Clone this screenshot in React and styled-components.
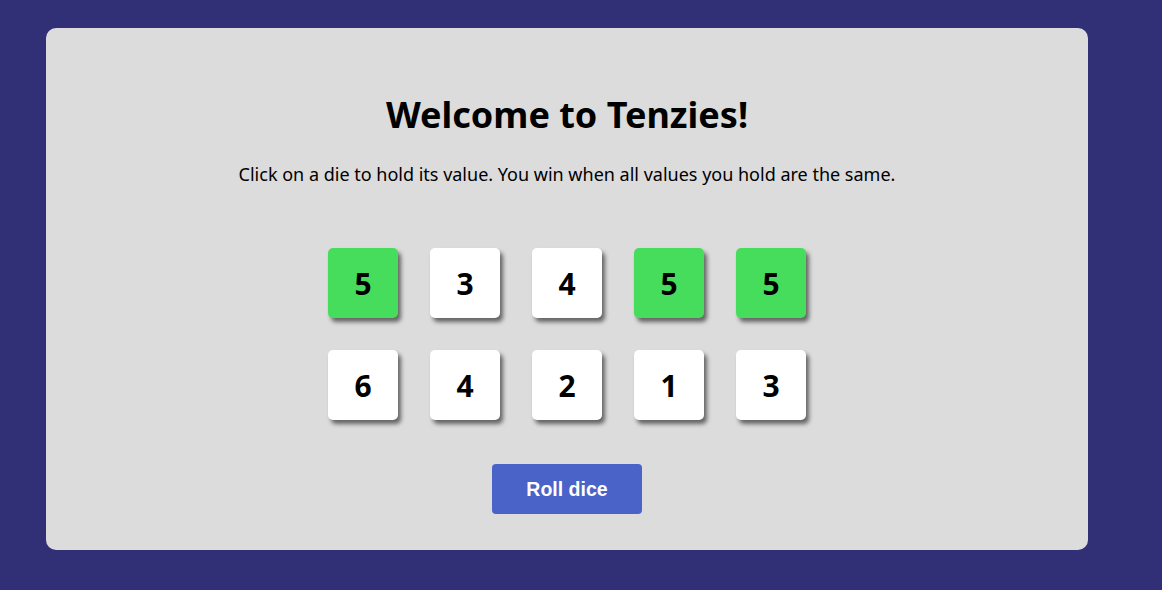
import React from "react";
import styled, { createGlobalStyle } from "styled-components";

const dice = [
  { value: 5, held: true },
  { value: 3, held: false },
  { value: 4, held: false },
  { value: 5, held: true },
  { value: 5, held: true },
  { value: 6, held: false },
  { value: 4, held: false },
  { value: 2, held: false },
  { value: 1, held: false },
  { value: 3, held: false },
];

export default function App() {
  return (
    <>
      <GlobalStyle />
      <Page>
        <Board>
          <Title>Welcome to Tenzies!</Title>
          <Instructions>
            Click on a die to hold its value. You win when all values you hold
            are the same.
          </Instructions>
          <DiceGrid>
            {dice.map((die, i) => (
              <Die key={i} $held={die.held}>
                {die.value}
              </Die>
            ))}
          </DiceGrid>
          <RollButton>Roll dice</RollButton>
        </Board>
      </Page>
    </>
  );
}

const GlobalStyle = createGlobalStyle`
  * {
    box-sizing: border-box;
  }
  body {
    margin: 0;
    background: #313077;
    font-family: "Noto Sans", "Open Sans", sans-serif;
  }
`;

const Page = styled.main`
  min-height: 590px;
  padding: 28px 74px 40px 46px;
`;

const Board = styled.section`
  height: 522px;
  background: #dcdcdc;
  border-radius: 10px;
  display: flex;
  flex-direction: column;
  align-items: center;
  padding-top: 61px;
`;

const Title = styled.h1`
  margin: 0;
  font-size: 36px;
  line-height: 52px;
  font-weight: 700;
  color: #000;
`;

const Instructions = styled.p`
  margin: 20px 0 0;
  font-size: 18px;
  line-height: 26px;
  color: #000;
`;

const DiceGrid = styled.div`
  margin-top: 61px;
  display: grid;
  grid-template-columns: repeat(5, 70px);
  grid-auto-rows: 70px;
  gap: 32px;
`;

const Die = styled.div`
  display: flex;
  align-items: center;
  justify-content: center;
  background: ${(p) => (p.$held ? "#47dd5c" : "#ffffff")};
  border-radius: 5px;
  box-shadow: 3px 4px 4px rgba(0, 0, 0, 0.55);
  font-size: 30px;
  font-weight: 700;
  color: #000;
  cursor: pointer;
`;

const RollButton = styled.button`
  margin-top: 44px;
  width: 150px;
  height: 50px;
  border: none;
  border-radius: 4px;
  background: #4a63c8;
  color: #fff;
  font-family: "Liberation Sans", Arial, sans-serif;
  font-size: 19.5px;
  font-weight: 700;
  cursor: pointer;
`;
